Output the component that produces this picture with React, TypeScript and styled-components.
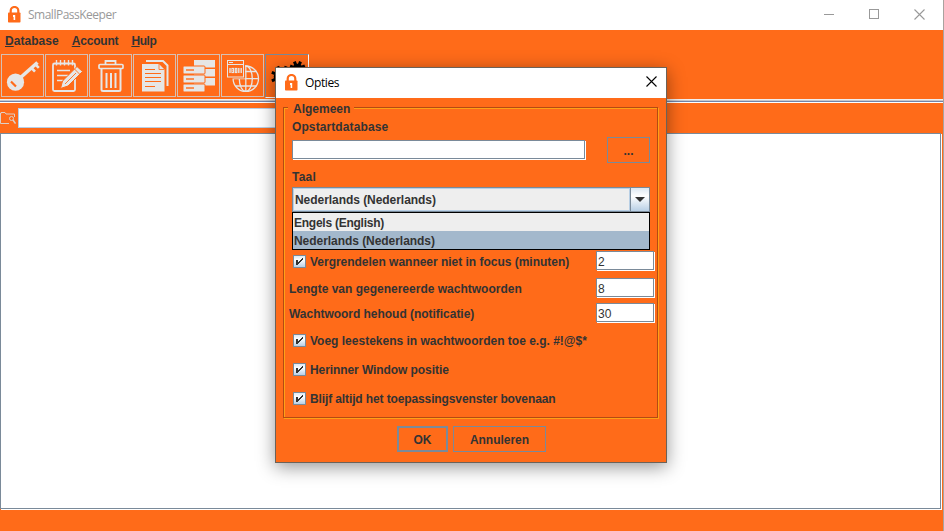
import React from "react";
import styled, { createGlobalStyle, css } from "styled-components";

const ORANGE = "#ff6b19";
const STEEL = "#7a8a99";
const INK = "#333333";
const ICON = "#e6e6e6";

const GlobalStyle = createGlobalStyle`
  * { box-sizing: border-box; }
  body { margin: 0; overflow: hidden; }
`;

const Window = styled.div`
  position: relative;
  width: 944px;
  height: 531px;
  display: flex;
  flex-direction: column;
  overflow: hidden;
  background: ${ORANGE};
  border-right: 1px solid #a9a39f;
  color: ${INK};
  font: bold 12px/16px "Liberation Sans", Arial, sans-serif;
  white-space: nowrap;
`;

const Label = styled.span<{ $track?: number }>`
  letter-spacing: ${(p) => p.$track ?? 0}px;
`;

const TitleBar = styled.div<{ $dialog?: boolean }>`
  height: 30px;
  flex: none;
  display: flex;
  align-items: center;
  background: #fff;
  padding-left: ${(p) => (p.$dialog ? 9 : 8)}px;
  > svg { margin-top: -2px; }
`;

const TitleText = styled.span<{ $active?: boolean; $track: number }>`
  flex: 1;
  margin-left: 7px;
  color: ${(p) => (p.$active ? "#000" : "#999")};
  font: 12px/16px "Open Sans", "Noto Sans", sans-serif;
  letter-spacing: ${(p) => p.$track}px;
`;

const WindowButtons = styled.div`
  display: flex;
  gap: 35px;
  margin: -2px 18px 0 0;
`;

const MenuBar = styled.div`
  height: 24px;
  flex: none;
  display: flex;
  padding: 3px 0 0 5px;
  gap: 13px;
`;

const Mnemonic = styled.span`
  text-decoration: underline;
  text-underline-offset: 1px;
  text-decoration-thickness: 1px;
`;

const Toolbar = styled.div`
  height: 45px;
  flex: none;
  display: flex;
  gap: 1px;
  padding-left: 1px;
`;

const ToolButton = styled.div<{ $pressed?: boolean }>`
  width: 43px;
  height: 43px;
  border: 1px solid #d6c0b4;
  ${(p) =>
    p.$pressed &&
    css`
      width: 44px;
      height: 44px;
      border-color: ${STEEL} #fff #fff ${STEEL};
    `}
  svg { display: block; }
`;

const Separator = styled.div`
  height: 4px;
  flex: none;
  border-top: 1px solid #f1efee;
  border-bottom: 1px solid #fff;
  background: linear-gradient(#c8c8cc 50%, #7484a8 50%);
`;

const SearchRow = styled.div`
  height: 30px;
  flex: none;
  display: flex;
  align-items: center;
  gap: 2px;
`;

const SearchField = styled.div`
  width: 560px;
  height: 20px;
  background: #fff;
  border: 1px solid #b8cfe5;
`;

const EtchedBox = styled.div`
  background: #fff;
  border: 1px solid ${STEEL};
  box-shadow: 1px 1px 0 #fff;
`;

const TablePane = styled(EtchedBox)`
  width: 941px;
  height: 376px;
  flex: none;
`;

const Dialog = styled.div`
  position: absolute;
  left: 275px;
  top: 67px;
  width: 392px;
  height: 396px;
  background: ${ORANGE};
  border: 1px solid #6c6258;
  box-shadow: 0 4px 17px rgba(0, 0, 0, 0.42);
`;

const CloseSlot = styled.div`
  margin: -3px 9px 0 0;
  display: flex;
`;

const Group = styled.div`
  width: 375px;
  height: 311px;
  margin: 9px 0 0 7px;
  border: 1px solid #b34b12;
  box-shadow: 1px 1px 0 #ffa017, inset 1px 1px 0 #ffa017;
  display: flex;
  flex-direction: column;
  padding-left: 5px;
`;

const Legend = styled.div`
  align-self: flex-start;
  height: 16px;
  margin: -7px 0 0 -1px;
  padding: 0 4px 0 5px;
  background: ${ORANGE};
`;

const Row = styled.div<{ $top: number; $h: number; $indent?: number; $drop?: number }>`
  flex: none;
  display: flex;
  align-items: center;
  height: ${(p) => p.$h}px;
  margin-top: ${(p) => p.$top}px;
  padding-top: ${(p) => p.$drop ?? 0}px;
  padding-left: ${(p) => p.$indent ?? 0}px;
`;

const PathField = styled(EtchedBox)`
  width: 293px;
  height: 19px;
  align-self: flex-start;
  margin-top: 3px;
`;

const Button = styled.div<{ $w: number; $h: number; $default?: boolean }>`
  width: ${(p) => p.$w}px;
  height: ${(p) => p.$h}px;
  border: ${(p) => (p.$default ? 2 : 1)}px solid ${STEEL};
  display: flex;
  align-items: center;
  justify-content: center;
  padding-top: 1px;
`;

const BrowseButton = styled(Button)`
  margin-left: 22px;
`;

const Combo = styled.div`
  position: relative;
  width: 358px;
  height: 25px;
  display: flex;
  background: #eee;
  border: 1px solid ${STEEL};
`;

const ComboValue = styled.div`
  flex: 1;
  border: 1px solid #b8cfe5;
  padding: 3px 0 0 1px;
`;

const ComboArrow = styled.div`
  width: 19px;
  border-left: 1px solid ${STEEL};
  background: linear-gradient(#dde8f3, #fff 35%, #b8cfe5);
  display: flex;
  align-items: center;
  justify-content: center;
`;

const Popup = styled.div`
  position: absolute;
  z-index: 1;
  left: -1px;
  top: 24px;
  width: 358px;
  height: 38px;
  border: 1px solid #000;
  background: #eee;
`;

const Option = styled.div<{ $selected?: boolean }>`
  height: 18px;
  padding: 2px 0 0 1px;
  background: ${(p) => (p.$selected ? "#a3b8cc" : "#eee")};
`;

const CheckBox = styled.div`
  width: 13px;
  height: 13px;
  margin-right: 4px;
  border: 1px solid ${STEEL};
  background: linear-gradient(#dde8f3, #fff 35%, #b8cfe5);
  svg { display: block; }
`;

const NumberField = styled(EtchedBox)`
  width: 58px;
  height: 19px;
  align-self: flex-start;
  margin: 0 3px 0 auto;
  padding: 1px 0 0 1px;
  font-weight: normal;
`;

const NumberRow = styled(Row)`
  ${NumberField} { margin-top: -2px; padding-top: 2px; }
  ${CheckBox} { margin-top: -2px; }
`;

const Actions = styled.div`
  display: flex;
  gap: 5px;
  margin: 8px 0 0 121px;
`;

function Lock() {
  return (
    <svg width="13" height="17" viewBox="0 0 13 17">
      <path d="M2.7 7V4.8a3.8 3.8 0 0 1 7.6 0V7" fill="none" stroke={ORANGE} strokeWidth="2.2" />
      <rect x="0" y="6.5" width="12.5" height="10" rx="0.8" fill={ORANGE} />
      <path d="M5 9h2.2v5H5.6v-3H5z" fill="#fff" />
    </svg>
  );
}

function CloseMark({ color }: { color: string }) {
  return (
    <svg width="11" height="11" viewBox="0 0 11 11">
      <path d="M.5.5l10 10M10.5.5l-10 10" stroke={color} strokeWidth="1.1" />
    </svg>
  );
}

function Tool({ x, pressed, children }: { x: number; pressed?: boolean; children: React.ReactNode }) {
  return (
    <ToolButton $pressed={pressed}>
      <svg width="41" height="41" viewBox={`${x} 55 41 41`} fill="none" stroke={ICON}>
        {children}
      </svg>
    </ToolButton>
  );
}

function Gear({ cx, cy, r }: { cx: number; cy: number; r: number }) {
  return (
    <g stroke="#000">
      <circle cx={cx} cy={cy} r={r} strokeWidth="3.6" />
      {[0, 45, 90, 135, 180, 225, 270, 315].map((a) => (
        <path key={a} d={`M${cx} ${cy - r - 1}v-3.5`} strokeWidth="3" transform={`rotate(${a + 22} ${cx} ${cy})`} />
      ))}
    </g>
  );
}

function CheckMark() {
  return (
    <CheckBox>
      <svg width="11" height="11" viewBox="0 0 11 11" shapeRendering="crispEdges">
        <path d="M2 4h2v2h1v-1h1v-1h1v-1h1v-1h1v2h-1v1h-1v1h-1v1h-1v1h-1v1H2z" fill={INK} />
      </svg>
    </CheckBox>
  );
}

function Check({ label, top, track }: { label: string; top: number; track?: number }) {
  return (
    <Row $top={top} $h={17} $indent={4}>
      <CheckMark />
      <Label $track={track}>{label}</Label>
    </Row>
  );
}

export default function App() {
  return (
    <Window>
      <GlobalStyle />
      <TitleBar>
        <Lock />
        <TitleText $track={-0.5}>SmallPassKeeper</TitleText>
        <WindowButtons>
          <svg width="10" height="10"><path d="M0 5.5h10" stroke="#999" /></svg>
          <svg width="10" height="10"><rect x=".5" y=".5" width="9" height="9" fill="none" stroke="#999" /></svg>
          <CloseMark color="#999" />
        </WindowButtons>
      </TitleBar>
      <MenuBar>
        <Label $track={0.05}><Mnemonic>D</Mnemonic>atabase</Label>
        <Label $track={-0.2}><Mnemonic>A</Mnemonic>ccount</Label>
        <Label $track={-0.4}><Mnemonic>H</Mnemonic>ulp</Label>
      </MenuBar>
      <Toolbar>
        <Tool x={2}>
          <circle cx="15.5" cy="82.2" r="8.6" fill={ICON} stroke="none" />
          <path d="M20 78L37.5 62.5" strokeWidth="3.6" />
          <path d="M35 64l3.8 3.8M31 67.5l4 4.2" strokeWidth="2.6" />
          <path d="M11 81.5l5 5" stroke={ORANGE} strokeWidth="2.2" />
        </Tool>
        <Tool x={46}>
          <rect x="53" y="63.5" width="22" height="27.5" rx="1.5" strokeWidth="1.8" />
          <path d="M56.5 60v5.5M60.5 60v5.5M64.5 60v5.5M68.5 60v5.5M72.5 60v5.5" strokeWidth="1.4" />
          <path d="M57 70.5h13M57 75.5h11M57 80.5h6" strokeWidth="1.3" />
          <path d="M60.5 88.5l2-7.5L77 66.5l5.500 5L68 86z" fill={ICON} stroke={ORANGE} />
          <path d="M74.5 69l5 5M65 84l11-11" stroke={ORANGE} strokeWidth="0.9" />
        </Tool>
        <Tool x={90}>
          <rect x="99" y="64.5" width="24" height="4" rx="1" strokeWidth="1.7" />
          <path d="M105.5 64v-3h10v3" strokeWidth="1.8" />
          <path d="M101.5 69v20.5q0 1.5 1.5 1.5h16q1.5 0 1.5-1.5V69" strokeWidth="2" />
          <path d="M106.5 73v15M111 73v15M115.5 73v15" strokeWidth="2" />
        </Tool>
        <Tool x={134}>
          <path d="M146 61h17l4.5 4.5V86" strokeWidth="2" />
          <path d="M142 64h17l5.5 5.5V91.5H142z" fill={ICON} stroke="none" />
          <path d="M159 64v5.5h5.5" stroke={ORANGE} strokeWidth="0.8" />
          <path d="M145 69.5h10M145 73.5h16M145 77.5h16M145 81.5h16M145 86.5h10" stroke={ORANGE} />
        </Tool>
        <Tool x={178}>
          {[60, 69, 78].map((y) => (
            <path key={y} d={`M194 ${y}h21v7.5h-21z`} fill={ICON} stroke="none" />
          ))}
          {[66, 75, 84].map((y) => (
            <g key={y}>
              <rect x="183" y={y} width="22" height="8" rx="1" fill={ICON} stroke={ORANGE} strokeWidth="1" />
              <path d={`M186 ${y + 4}h8`} stroke={ORANGE} strokeWidth="1.4" />
            </g>
          ))}
        </Tool>
        <Tool x={222}>
          <g strokeWidth="1.3">
            <circle cx="245.8" cy="78.7" r="12.7" />
            <ellipse cx="245.8" cy="78.7" rx="6.5" ry="12.7" />
            <path d="M245.8 66v25.5M233 78.7h26M235.5 71.5h21M235.5 86h21" />
          </g>
          <rect x="226" y="59" width="19" height="19.5" fill={ORANGE} stroke="none" />
          <rect x="227.5" y="60.5" width="16" height="16.5" />
          <path d="M227 64.5h17M229 62.5h4" />
          <path d="M230 68v5M238.8 68v5M241.2 68v5" strokeWidth="1.4" />
          <rect x="232" y="68.5" width="1.5" height="4" strokeWidth="1.2" />
          <rect x="235.3" y="68.5" width="1.5" height="4" strokeWidth="1.2" />
        </Tool>
        <Tool x={266} pressed>
          <Gear cx={282} cy={76.5} r={6.5} />
          <Gear cx={297.5} cy={69} r={3.5} />
        </Tool>
      </Toolbar>
      <Separator />
      <SearchRow>
        <svg width="16" height="14" viewBox="0 0 16 14" fill="none" stroke="#ddd0c8">
          <path d="M0 2.5h1V1.5h4l1 1.5h8.5V6M.5 2v10.5H9" />
          <circle cx="11.5" cy="7.5" r="2" />
          <path d="M13 9l2.5 3.5" strokeWidth="1.5" />
        </svg>
        <SearchField />
      </SearchRow>
      <TablePane />

      <Dialog>
        <TitleBar $dialog>
          <Lock />
          <TitleText $active $track={-0.4}>Opties</TitleText>
          <CloseSlot><CloseMark color="#000" /></CloseSlot>
        </TitleBar>
        <Group>
          <Legend><Label>Algemeen</Label></Legend>
          <Row $top={2} $h={16} $indent={3}><Label $track={0.1}>Opstartdatabase</Label></Row>
          <Row $top={2} $h={26} $indent={3}>
            <PathField />
            <BrowseButton $w={43} $h={26}><Label>...</Label></BrowseButton>
          </Row>
          <Row $top={6} $h={16} $indent={3}><Label $track={0.2}>Taal</Label></Row>
          <Row $top={2} $h={25} $indent={3}>
            <Combo>
              <ComboValue><Label $track={-0.05}>Nederlands (Nederlands)</Label></ComboValue>
              <ComboArrow>
                <svg width="10" height="5"><path d="M0 0h10L5 5z" fill={INK} /></svg>
              </ComboArrow>
              <Popup>
                <Option><Label $track={-0.25}>Engels (English)</Label></Option>
                <Option $selected><Label $track={-0.05}>Nederlands (Nederlands)</Label></Option>
              </Popup>
            </Combo>
          </Row>
          <NumberRow $top={39} $h={20} $indent={4} $drop={2}>
            <CheckMark />
            <Label $track={-0.02}>Vergrendelen wanneer niet in focus (minuten)</Label>
            <NumberField>2</NumberField>
          </NumberRow>
          <NumberRow $top={7} $h={20} $drop={2}>
            <Label>Lengte van gegenereerde wachtwoorden</Label>
            <NumberField>8</NumberField>
          </NumberRow>
          <NumberRow $top={5} $h={20} $drop={2}>
            <Label $track={-0.03}>Wachtwoord hehoud (notificatie)</Label>
            <NumberField>30</NumberField>
          </NumberRow>
          <Check label="Voeg leestekens in wachtwoorden toe e.g. #!@$*" top={9} />
          <Check label="Herinner Window positie" top={12} track={-0.08} />
          <Check label="Blijf altijd het toepassingsvenster bovenaan" top={12} track={-0.12} />
        </Group>
        <Actions>
          <Button $w={51} $h={26} $default><Label>OK</Label></Button>
          <Button $w={93} $h={26}><Label $track={-0.02}>Annuleren</Label></Button>
        </Actions>
      </Dialog>
    </Window>
  );
}
